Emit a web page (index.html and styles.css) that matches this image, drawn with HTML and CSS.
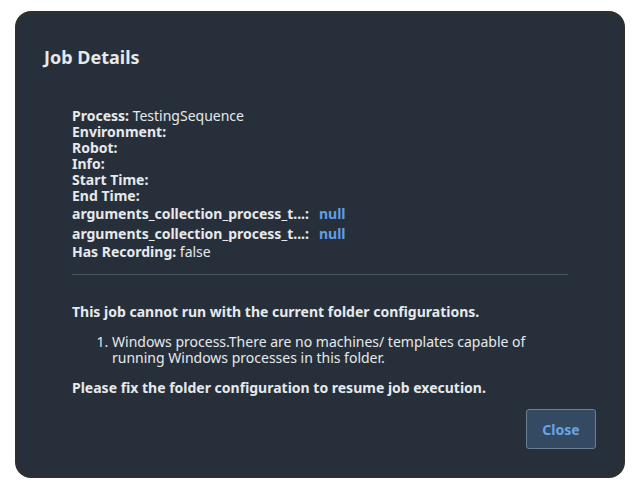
FILE: index.html
```html
<!DOCTYPE html>
<html lang="en">
<head>
<meta charset="utf-8">
<title>Job Details</title>
<link rel="stylesheet" href="styles.css">
</head>
<body>
<div class="modal">
  <h2 class="title">Job Details</h2>
  <div class="content">
    <div class="details">
      <div class="row"><b>Process:</b> TestingSequence</div>
      <div class="row"><b>Environment:</b></div>
      <div class="row"><b>Robot:</b></div>
      <div class="row"><b>Info:</b></div>
      <div class="row"><b>Start Time:</b></div>
      <div class="row"><b>End Time:</b></div>
      <div class="row arg"><b>arguments_collection_process_t...:</b><span class="link">null</span></div>
      <div class="row arg"><b>arguments_collection_process_t...:</b><span class="link">null</span></div>
      <div class="row"><b>Has Recording:</b> false</div>
    </div>
    <hr class="divider">
    <p class="strong">This job cannot run with the current folder configurations.</p>
    <ol class="reasons">
      <li>Windows process.There are no machines/ templates capable of running Windows processes in this folder.</li>
    </ol>
    <p class="strong">Please fix the folder configuration to resume job execution.</p>
  </div>
  <div class="actions">
    <button class="btn">Close</button>
  </div>
</div>
</body>
</html>
```
FILE: styles.css
```css
html, body {
  margin: 0;
  padding: 0;
  background: #ffffff;
}
body {
  font-family: "Noto Sans", "Open Sans", sans-serif;
  color: #e6e9ec;
}
.modal {
  box-sizing: border-box;
  margin: 11px 0 0 15px;
  width: 610px;
  height: 467px;
  background: #27303a;
  border: 3px solid #2e2f30;
  border-radius: 16px;
  padding: 0 26px;
  display: flex;
  flex-direction: column;
}
.title {
  margin: 31px 0 0;
  font-size: 18px;
  line-height: 24px;
  font-weight: 700;
  color: #e6e9ec;
}
.content {
  margin: 39px 28px 0 28px;
  font-size: 14px;
  line-height: 16px;
}
.row b {
  font-weight: 700;
}
.row.arg {
  display: flex;
  align-items: center;
  height: 20px;
}
.link {
  color: #5f9ee8;
  font-weight: 700;
  margin-left: 10px;
}
.divider {
  border: 0;
  border-top: 1px solid #4b5560;
  margin: 14px 0 0;
}
.strong {
  font-weight: 700;
  margin: 29px 0 0;
}
.reasons {
  margin: 14px 0 0;
  padding-left: 40px;
}
.reasons + .strong {
  margin-top: 14px;
}
.actions {
  margin-top: auto;
  margin-bottom: 26px;
  display: flex;
  justify-content: flex-end;
}
.btn {
  width: 70px;
  height: 40px;
  background: #344a62;
  border: 1px solid #6b7e92;
  border-radius: 3px;
  color: #6aa4e2;
  font-family: "Noto Sans", "Open Sans", sans-serif;
  font-size: 14px;
  font-weight: 700;
  padding: 0;
}
```
